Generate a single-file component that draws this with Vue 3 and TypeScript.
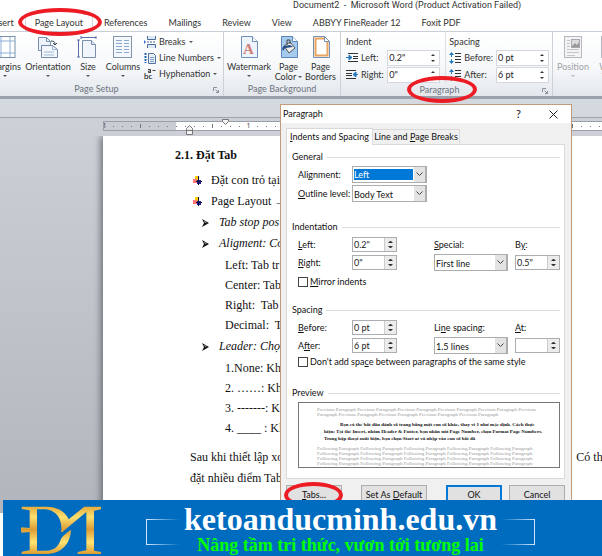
<script setup lang="ts">
import { ref } from 'vue'

const tabs: string[] = ['Insert', 'Page Layout', 'References', 'Mailings', 'Review', 'View', 'ABBYY FineReader 12', 'Foxit PDF']
const activeTab = ref('Page Layout')

const indentLeft = ref('0.2"')
const indentRight = ref('0"')
const before = ref('0 pt')
const after = ref('6 pt')
const by = ref('0.5"')
const at = ref('')
const mirror = ref(false)
const noSpace = ref(false)

const alignOptions: string[] = ['Left: Tab tr', 'Center: Tab', 'Right:  Tab', 'Decimal:  T']
const leaderOptions: string[] = ['1.None: Kh', '2. ……: Kh', '3. -------: K', '4. ____ : Kl']

const previous = Array(5).fill('Previous Paragraph').join(' ')
const following = Array(5).fill('Following Paragraph').join(' ')

const ticks: number[] = Array.from({ length: 56 }, (_, i) => i)
</script>

<template>
  <div class="window">
    <header class="titlebar">Document2 &nbsp;-&nbsp; Microsoft Word (Product Activation Failed)</header>

    <nav class="tabs">
      <button
        v-for="t in tabs"
        :key="t"
        type="button"
        class="tab"
        :class="{ active: t === activeTab }"
        @click="activeTab = t"
      >{{ t }}</button>
    </nav>

    <section class="ribbon">
      <div class="group setup">
        <div class="items">
          <button type="button" class="big w-margins">
            <svg width="22" height="22" viewBox="0 0 22 22"><rect x="2" y=".5" width="19" height="21" fill="#fff" stroke="#7a90ac" /><path d="M7 1v20M16 1v20M2 5h19M2 17h19" stroke="#8db0d8" /></svg>
            <span>Margins</span><i class="arrow"></i>
          </button>
          <button type="button" class="big w-orient">
            <svg width="22" height="22" viewBox="0 0 22 22"><path d="M1.500 1.500h8l4 4v9h-12z" fill="#eef4fb" stroke="#7a90ac" /><path d="M9.500 1.500v4h4" fill="none" stroke="#7a90ac" /><path d="M4.500 9.500h11l5 4v8h-16z" fill="#f4f8fd" stroke="#6f88a8" /><path d="M15.500 9.500v4h5M7 16h10M7 19h10" fill="none" stroke="#9cb6d6" /><path d="M14 5c3 0 4 1 4 3m-2-1 2 2 2-2" fill="none" stroke="#345" /></svg>
            <span>Orientation</span><i class="arrow"></i>
          </button>
          <button type="button" class="big w-size">
            <svg width="22" height="22" viewBox="0 0 22 22"><path d="M4 1.500h15M1.500 4v17M4 0v3M19 0v3M0 4h3M0 21h3" stroke="#5b6fa3" /><path d="M5.500 4.500h9l4 4v13h-13z" fill="#f1f6fc" stroke="#7a90ac" /><path d="M14.500 4.500v4h4" fill="#d5e3f3" stroke="#7a90ac" /></svg>
            <span>Size</span><i class="arrow"></i>
          </button>
          <button type="button" class="big w-cols">
            <svg width="22" height="22" viewBox="0 0 22 22"><rect x="1.500" y=".5" width="18" height="21" fill="#f4f8fd" stroke="#8496ae" /><path d="M4 4.500h6M4 7.500h6M4 10.500h6M4 13.500h6M4 16.500h6M12 4.500h5M12 7.500h5M12 10.500h5M12 13.500h5M12 16.500h5" stroke="#8ba9cf" /></svg>
            <span>Columns</span><i class="arrow"></i>
          </button>
          <div class="stack">
            <button type="button" class="small">
              <svg width="12" height="12" viewBox="0 0 12 12"><path d="M3.500 0v3.500h8V0M3.500 12V8.500h8V12" fill="#dbe8f7" stroke="#4a6a99" /><path d="M3 6h9" stroke="#4a6a99" stroke-dasharray="2 1" /><path d="M0 4l2 2-2 2z" fill="#37c" /></svg>
              Breaks <i class="arrow"></i>
            </button>
            <button type="button" class="small">
              <svg width="12" height="12" viewBox="0 0 12 12"><path d="M4.500 1.500h5l2 2v8h-7z" fill="#e7effa" stroke="#55719c" /><path d="M6 5.500h4M6 7.500h4M6 9.500h4" stroke="#7c9ccb" /><path d="M1.500 1v10" stroke="#26a" stroke-width="2" stroke-dasharray="2 1" /></svg>
              Line Numbers <i class="arrow"></i>
            </button>
            <button type="button" class="small">
              <svg width="12" height="12" viewBox="0 0 12 12"><text x="0" y="11" font-size="8">bc</text><path d="M4 1.500h2.500v3.500M6.500 3H4.500v1.500h2M8.500 2.500h3" fill="none" stroke="#444" /></svg>
              Hyphenation <i class="arrow"></i>
            </button>
          </div>
        </div>
        <div class="caption">Page Setup
          <svg class="launch" width="6" height="6" viewBox="0 0 6 6"><path d="M.5 4V.5H4M2.500 2.500l3 3M5.500 3v2.500H3" fill="none" stroke="#8a919c" /></svg>
        </div>
      </div>

      <div class="group background">
        <div class="items">
          <button type="button" class="big w-water">
            <svg width="22" height="22" viewBox="0 0 22 22"><path d="M3.500.5h11l5 5v16h-16z" fill="#eef4fb" stroke="#6f90bb" /><path d="M14.500.5v5h5" fill="#fff" stroke="#6f90bb" /><text x="5" y="18" font-size="15" font-weight="bold" font-family="Liberation Serif, serif" fill="#d0807a">A</text></svg>
            <span>Watermark</span><i class="arrow"></i>
          </button>
          <button type="button" class="big w-color">
            <svg width="22" height="22" viewBox="0 0 22 22"><path d="M3.500.5h11l5 5v16h-16z" fill="#a6cbee" stroke="#5c86ba" /><path d="M14.500.5v5h5" fill="#fff" stroke="#5c86ba" /><path d="M6 10l6-4 5 6-6 5z" fill="#eee" stroke="#555" /><path d="M9 9V4h3v4" fill="none" stroke="#444" /><path d="M6 10c-2 1-2 3-1 5l2-3 8-1-3-2z" fill="#234a80" /></svg>
            <span>Page</span><span>Color <i class="arrow"></i></span>
          </button>
          <button type="button" class="big w-border">
            <svg width="22" height="22" viewBox="0 0 22 22"><path d="M3.500.5h11l5 5v16h-16z" fill="#fff" stroke="#7590b5" /><path d="M5.500 2.500h9l3 4v13h-12z" fill="#fff" stroke="#e8a45e" stroke-width="2" /><path d="M14.500.5v5h5z" fill="#fff" stroke="#7590b5" /></svg>
            <span>Page</span><span>Borders</span>
          </button>
        </div>
        <div class="caption">Page Background</div>
      </div>

      <div class="group para">
        <div class="halves">
          <div class="half">
            <div class="half-title">Indent</div>
            <label class="field" for="r-left">
              <svg width="12" height="11" viewBox="0 0 12 11"><path d="M2 1.500h10M7 4.500h5M7 6.500h5M2 9.500h10" stroke="#333" /><path d="M0 5.500h4M3 3l3 2.500L3 8z" fill="#27b" stroke="#27b" /></svg>
              <span>Left:</span>
              <span class="spin"><input id="r-left" v-model="indentLeft" type="text" /><i class="ud"></i></span>
            </label>
            <label class="field" for="r-right">
              <svg width="12" height="11" viewBox="0 0 12 11"><path d="M0 1.500h10M0 4.500h6M0 6.500h6M0 9.500h10" stroke="#333" /><path d="M8 5.500h4M10 3L7 5.500 10 8z" fill="#27b" stroke="#27b" /></svg>
              <span>Right:</span>
              <span class="spin"><input id="r-right" v-model="indentRight" type="text" /><i class="ud"></i></span>
            </label>
          </div>
          <div class="half second">
            <div class="half-title">Spacing</div>
            <label class="field" for="r-before">
              <svg width="12" height="12" viewBox="0 0 12 12"><path d="M6 1.500h6M6 4.500h6M6 7.500h6M6 10.500h6" stroke="#333" /><path d="M2.500 0L5 3H0zM2.500 12L5 9H0zM2 3h1v2H2zM2 7h1v2H2z" fill="#27b" /></svg>
              <span>Before:</span>
              <span class="spin"><input id="r-before" v-model="before" type="text" /><i class="ud"></i></span>
            </label>
            <label class="field" for="r-after">
              <svg width="12" height="12" viewBox="0 0 12 12"><path d="M6 1.500h6M6 4.500h6M6 7.500h6M6 10.500h6" stroke="#333" /><path d="M2.500 0L5 3H0zM2.500 12L5 9H0zM2 3h1v2H2zM2 7h1v2H2z" fill="#27b" /></svg>
              <span>After:</span>
              <span class="spin"><input id="r-after" v-model="after" type="text" /><i class="ud"></i></span>
            </label>
          </div>
        </div>
        <div class="caption">Paragraph
          <svg class="launch" width="6" height="6" viewBox="0 0 6 6"><path d="M.5 4V.5H4M2.500 2.500l3 3M5.500 3v2.500H3" fill="none" stroke="#8a919c" /></svg>
        </div>
      </div>

      <div class="group arrange">
        <div class="items">
          <button type="button" class="big w-pos" disabled>
            <svg width="22" height="22" viewBox="0 0 22 22"><rect x="2.500" y=".5" width="17" height="21" fill="#f3f3f5" stroke="#b5b8be" /><path d="M5 4.500h3M5 7.500h3M5 10.500h3M5 13.500h12M5 16.500h12M5 19.500h8" stroke="#c3c5ca" /><rect x="9.500" y="3.500" width="8" height="8" fill="#ddd" stroke="#a6a8ad" /><path d="M10 10l3-3 2 2 2-3v5h-7z" fill="#999" /></svg>
            <span>Position</span><i class="arrow"></i>
          </button>
          <button type="button" class="big w-wrap" disabled>
            <svg width="22" height="22" viewBox="0 0 22 22"><rect x="2.500" y=".5" width="17" height="21" fill="#f3f3f5" stroke="#b5b8be" /></svg>
            <span>Wrap</span><span>Text</span>
          </button>
        </div>
      </div>
    </section>

    <div class="gap-strip"></div>

    <div class="workspace">
      <div class="ruler">
        <div class="ruler-track">
          <i v-for="n in ticks" :key="n" :class="{ tall: n % 8 === 4, digit: n % 16 === 0 && n < 20 }"><template v-if="n % 16 === 0 && n < 20">1</template></i>
        </div>
        <svg class="indent-low" width="7" height="10" viewBox="0 0 7 10"><path d="M.5 3.500l3-3 3 3v6h-6zM.5 5.500h6" fill="#f3f3f3" stroke="#777" /></svg>
        <svg class="indent-top" width="7" height="6" viewBox="0 0 7 6"><path d="M.5.5h6v2l-3 3-3-3z" fill="#f3f3f3" stroke="#777" /></svg>
      </div>

      <main class="page">
        <h1>2.1. Đặt Tab</h1>
        <ul class="bullets">
          <li v-for="b in ['Đặt con trỏ tại', 'Page Layout →']" :key="b">
            <svg width="9" height="9" viewBox="0 0 9 9"><rect x="2" y="0" width="4" height="5" fill="#fc0" /><rect x="0" y="3" width="4" height="4" fill="#f77" /><rect x="4" y="4" width="4" height="4" fill="#229" /><path d="M5.500 0v9M3 5.500h6" stroke="#114" /></svg>
            <span>{{ b }}</span>
          </li>
        </ul>
        <ul class="arrows">
          <li><svg width="7" height="8" viewBox="0 0 7 8"><path d="M0 0l7 4-7 4 2-4zM2 2l1 1.500h2z" fill="#111" fill-rule="evenodd" /></svg><em>Tab stop pos</em></li>
          <li><svg width="7" height="8" viewBox="0 0 7 8"><path d="M0 0l7 4-7 4 2-4zM2 2l1 1.500h2z" fill="#111" fill-rule="evenodd" /></svg><em>Aligment: Co</em></li>
        </ul>
        <ul class="options"><li v-for="o in alignOptions" :key="o">{{ o }}</li></ul>
        <ul class="arrows">
          <li><svg width="7" height="8" viewBox="0 0 7 8"><path d="M0 0l7 4-7 4 2-4zM2 2l1 1.500h2z" fill="#111" fill-rule="evenodd" /></svg><em>Leader: Chọ</em></li>
        </ul>
        <ul class="options"><li v-for="o in leaderOptions" :key="o">{{ o }}</li></ul>
        <p class="first"><span>Sau khi thiết lập xo</span><span class="tail">Có thể</span></p>
        <p>đặt nhiều  điểm Tab</p>
        <h1 class="next">2.2. Xóa Tab</h1>
      </main>
    </div>

    <div class="mark mark-tab"></div>
    <div class="mark mark-group"></div>

    <form class="dialog" role="dialog" aria-labelledby="dlg-title" @submit.prevent>
      <div class="dlg-bar">
        <span id="dlg-title">Paragraph</span>
        <button type="button" class="glyph" aria-label="Help">?</button>
        <button type="button" class="glyph" aria-label="Close"><svg width="9" height="9" viewBox="0 0 9 9"><path d="M.5.5l8 8M8.500.5l-8 8" stroke="#222" /></svg></button>
      </div>
      <div class="dlg-tabs">
        <button type="button" class="on"><u>I</u>ndents and Spacing</button>
        <button type="button">Line and <u>P</u>age Breaks</button>
      </div>
      <div class="panel">
        <h2>General</h2>
        <div class="grid general">
          <label for="align">Ali<u>g</u>nment:</label>
          <span class="drop focus"><select id="align"><option>Left</option></select><svg width="7" height="5" viewBox="0 0 7 5"><path d="M.5.5l3 3 3-3" fill="none" stroke="#444" /></svg></span>
          <label for="outline"><u>O</u>utline level:</label>
          <span class="drop"><select id="outline"><option>Body Text</option></select><svg width="7" height="5" viewBox="0 0 7 5"><path d="M.5.5l3 3 3-3" fill="none" stroke="#444" /></svg></span>
        </div>

        <h2 class="h-indent">Indentation</h2>
        <div class="grid">
          <label for="d-left"><u>L</u>eft:</label>
          <span class="spin dlg"><input id="d-left" v-model="indentLeft" type="text" /><i class="ud"></i></span>
          <label for="special"><u>S</u>pecial:</label>
          <label for="by">B<u>y</u>:</label>
          <label for="d-right"><u>R</u>ight:</label>
          <span class="spin dlg"><input id="d-right" v-model="indentRight" type="text" /><i class="ud"></i></span>
          <span class="drop"><select id="special"><option>First line</option></select><svg width="7" height="5" viewBox="0 0 7 5"><path d="M.5.5l3 3 3-3" fill="none" stroke="#444" /></svg></span>
          <span class="spin dlg"><input id="by" v-model="by" type="text" /><i class="ud"></i></span>
        </div>
        <label class="check mirror"><input v-model="mirror" type="checkbox" /><span><u>M</u>irror indents</span></label>

        <h2>Spacing</h2>
        <div class="grid">
          <label for="d-before"><u>B</u>efore:</label>
          <span class="spin dlg"><input id="d-before" v-model="before" type="text" /><i class="ud"></i></span>
          <label for="line">Li<u>n</u>e spacing:</label>
          <label for="at"><u>A</u>t:</label>
          <label for="d-after">A<u>f</u>ter:</label>
          <span class="spin dlg"><input id="d-after" v-model="after" type="text" /><i class="ud"></i></span>
          <span class="drop"><select id="line"><option>1.5 lines</option></select><svg width="7" height="5" viewBox="0 0 7 5"><path d="M.5.5l3 3 3-3" fill="none" stroke="#444" /></svg></span>
          <span class="spin dlg"><input id="at" v-model="at" type="text" /><i class="ud"></i></span>
        </div>
        <label class="check same"><input v-model="noSpace" type="checkbox" /><span>Don't add spa<u>c</u>e between paragraphs of the same style</span></label>

        <h2 class="h-preview">Preview</h2>
        <div class="preview">
          <p class="ghost">{{ previous }} Previous<br />Paragraph {{ previous.slice(0, 75) }}</p>
          <p class="sample">Bạn có thể bắt đầu đánh số trang bằng một con số khác, thay vì 1 như mặc định. Cách thực<br />hiện: Tại thẻ Insert, nhóm Header &amp; Footer, bạn nhấn nút Page Number, chọn Format Page Numbers.<br />Trong hộp thoại xuất hiện, bạn chọn Start at và nhập vào con số bắt đầ</p>
          <p class="ghost"><template v-for="n in 4" :key="n">{{ following }}<br /></template></p>
        </div>
      </div>
      <div class="dlg-buttons">
        <button type="button" class="b-tabs"><u>T</u>abs...<i class="mark mark-btn"></i></button>
        <button type="button" class="b-default">Set As <u>D</u>efault</button>
        <button type="submit" class="b-ok">OK</button>
        <button type="button" class="b-cancel">Cancel</button>
      </div>
    </form>

    <footer class="banner">
      <svg class="logo" width="80" height="48" viewBox="0 0 240 144">
        <defs>
          <linearGradient id="gold" x1="0" y1="0" x2="0" y2="1">
            <stop offset="0" stop-color="#e8ac3c" /><stop offset=".22" stop-color="#fbe070" />
            <stop offset=".48" stop-color="#dc9c34" /><stop offset=".75" stop-color="#ffe473" /><stop offset="1" stop-color="#dc9c30" />
          </linearGradient>
        </defs>
        <path fill="url(#gold)" d="M2 2H75C108 2 132 16 143 40L190 2H240V10L219 14V134L240 138V144H170V138L196 133V18L124 78H120C124 60 120 14 72 10H48V134H72C108 134 116 112 120 98C128 86 138 80 150 71C148 112 124 144 72 144H2V137L26 133V78L2 80L0 76V66L2 64L26 66V13L2 9Z" />
      </svg>
      <div class="slogan">
        <i class="bracket left"></i>
        <div class="lines">
          <a href="#">ketoanducminh.edu.vn</a>
          <span>Nâng tầm tri thức, vươn tới tương lai</span>
        </div>
        <i class="bracket right"></i>
      </div>
    </footer>
  </div>
</template>

<style>
body { margin: 0; background: #fff; }
</style>

<style scoped>
* { box-sizing: border-box; }
button, input, select { font: inherit; color: inherit; margin: 0; padding: 0; border: 0; background: none; }
button { white-space: nowrap; }
h1, h2, p, ul { margin: 0; padding: 0; }
ul { list-style: none; }
svg { display: block; flex: none; }

.window {
  position: relative;
  display: flex;
  flex-direction: column;
  min-height: 100vh;
  overflow: hidden;
  font: 9px/12px Lato, "Liberation Sans", sans-serif;
  color: #333;
}
.titlebar { height: 14px; font-family: Roboto, sans-serif; line-height: 10px; padding-left: 293px; color: #333; white-space: nowrap; }
.tabs { display: flex; gap: 21px; height: 17px; margin-left: -9px; }
.tab { line-height: 16px; }
.tab.active { box-shadow: -10px 0 0 -1px #fff, -10px 0 0 0 #d4d8de, 10px 0 0 -1px #fff, 10px 0 0 0 #d4d8de; }

.ribbon {
  display: flex;
  height: 65px;
  border-top: 1px solid #c9cfd8;
  background: linear-gradient(#fff, #f6f8fa 55%, #e3e7ec);
  position: relative;
}
.group { display: flex; flex-direction: column; justify-content: space-between; flex: none; border-right: 1px solid #cdd1d7; }
.items { display: flex; align-items: flex-start; padding-top: 4px; }
.setup { width: 224px; }
.setup .items { margin-left: -15px; }
.background { width: 117px; }
.para { width: 212px; }
.arrange { flex: 1 1 0; overflow: hidden; border: 0; }
.caption { display: flex; align-items: center; justify-content: center; gap: 0; position: relative; height: 14px; color: #6d7480; }
.setup .caption { padding-right: 30px; }
.para .caption { padding-right: 14px; }
.launch { position: absolute; right: 4px; top: 5px; }
.big { display: flex; flex-direction: column; align-items: center; flex: none; line-height: 10px; }
.big svg { margin-bottom: 4px; }
.big > .arrow { margin-top: 3px; }
.big:disabled { color: #a0a3a8; }
.arrow { display: inline-block; width: 0; height: 0; border: 2px solid transparent; border-top-color: #555; border-bottom: 0; vertical-align: 2px; }
.big:disabled .arrow { border-top-color: #bbb; }
.w-margins { width: 40px; }
.w-orient { width: 46px; }
.w-size { width: 34px; }
.w-cols { width: 36px; }
.w-water { width: 50px; }
.w-color { width: 29px; }
.w-border { width: 35px; }
.w-pos { width: 40px; }
.w-wrap { width: 34px; }
.stack { display: flex; flex-direction: column; gap: 4px; padding-left: 3px; }
.small { display: flex; align-items: center; gap: 3px; height: 12px; }

.halves { display: flex; }
.half { flex: 1 1 0; padding: 4px 5px 0 5px; }
.half.second { border-left: 1px solid #dcdfe4; padding: 4px 3px 0 3px; }
.half-title { height: 13px; }
.field { display: flex; align-items: center; gap: 3px; height: 17px; }
.field .spin { margin-left: auto; width: 53px; height: 16px; border: 1px solid #d4d8de; }
.spin { display: flex; background: #fff; color: #222; }
.spin input { flex: 1 1 0; min-width: 0; padding-left: 1px; }
.ud { display: flex; flex-direction: column; justify-content: space-between; width: 12px; padding: 3px 4px; }
.ud::before, .ud::after { content: ""; border: 2px solid transparent; }
.ud::before { border-bottom-color: #333; border-top: 0; }
.ud::after { border-top-color: #333; border-bottom: 0; }

.gap-strip { height: 22px; border-top: 3px solid #9aa1ab; border-bottom: 1px solid #9da3ad; background: #d4d9e0; }

.workspace {
  display: flex;
  flex-direction: column;
  height: 395px;
  padding-left: 103px;
  background: linear-gradient(#cdd1d7, #b2b5bb);
}
.ruler { position: relative; height: 18px; padding-top: 3px; flex: none; }
.ruler-track { display: flex; align-items: center; height: 10px; overflow: hidden; border: 1px solid #9a9fa8; border-right: 0; background: linear-gradient(90deg, #c9cdd3 72px, #fff 72px); }
.ruler-track i { flex: none; width: 1px; height: 1px; margin-right: 8px; background: #777; }
.ruler-track i.tall { height: 4px; }
.ruler-track i.digit { display: flex; justify-content: center; height: 8px; background: none; font: 7px/8px "Open Sans", sans-serif; }
.indent-low { position: absolute; left: 83px; top: 7px; }
.indent-top { position: absolute; left: 119px; top: 1px; }
.page {
  flex: 1;
  padding: 10px 0 0 72px;
  background: #fff;
  box-shadow: -2px 0 7px #666b73;
  font: 12px/21px "Liberation Serif", serif;
  color: #111;
  white-space: pre;
  overflow: hidden;
  clip-path: inset(0 0 0 -10px);
}
h1 { font-size: 12px; line-height: 19px; }
.bullets { padding: 5px 0 0 18px; }
.bullets li { display: flex; align-items: center; gap: 9px; }
.arrows { padding-left: 27px; }
.arrows li { display: flex; align-items: center; gap: 10px; }
.options { padding: 1px 0 1px 50px; line-height: 20px; }
.page p { margin-left: 15px; display: flex; justify-content: space-between; }
.page .first { margin-top: 8px; }
.tail { flex: none; margin-right: -6px; }
.next { line-height: 33px; }

.mark { position: absolute; border: 4px solid #ed1c24; border-radius: 50%; pointer-events: none; }
.mark-tab { left: 18px; top: 8px; width: 84px; height: 28px; }
.mark-group { left: 407px; top: 76px; width: 70px; height: 27px; }
.mark-btn { left: -3px; top: -4px; width: 59px; height: 26px; }

.dialog {
  position: absolute;
  left: 280px;
  top: 104px;
  width: 292px;
  padding-bottom: 12px;
  border: 1px solid #c49a78;
  background: #f0f0f0;
  color: #111;
}
.dlg-bar { display: flex; align-items: center; height: 18px; padding: 0 13px 0 2px; background: #fff; }
.dlg-bar #dlg-title { flex: 1; }
.glyph { display: flex; align-items: center; justify-content: center; font-size: 11px; }
.glyph + .glyph { margin-left: 28px; }
.dlg-tabs { display: flex; align-items: flex-end; padding: 5px 0 0 5px; }
.dlg-tabs button { width: 87px; height: 15px; border: 1px solid #d9d9d9; border-bottom: 0; border-left: 0; }
.dlg-tabs .on { height: 17px; margin-bottom: -1px; border-left: 1px solid #d9d9d9; background: #fff; position: relative; }
.panel { margin: 0 6px 0 5px; padding: 5px 4px 10px 5px; border: 1px solid #d9d9d9; background: #fff; }
h2 { display: flex; align-items: center; gap: 4px; font-size: 9px; font-weight: 400; height: 14px; margin-bottom: 2px; }
h2::after { content: ""; flex: 1; height: 1px; background: #ddd; }
.h-indent { margin-top: 18px; }
.h-preview { margin-top: 18px; }
.grid { display: grid; grid-template-columns: 47px 75px 74px 45px; column-gap: 7px; row-gap: 1px; padding-left: 6px; white-space: nowrap; }
.grid > * { height: 17px; line-height: 17px; }
.general { grid-template-columns: 47px 75px; row-gap: 2px; }
.drop { display: flex; align-items: center; position: relative; border: 1px solid #adadad; background: linear-gradient(#e3e3e3, #e3e3e3) right / 12px 100% no-repeat #fff; box-shadow: inset -13px 0 0 -12px #adadad; }
.drop select { width: 100%; height: 100%; padding-left: 1px; appearance: none; }
.drop svg { position: absolute; right: 3px; pointer-events: none; }
.drop.focus select { background: #0078d7; color: #fff; width: 59px; height: 11px; margin-left: 1px; padding-left: 0; line-height: 11px; }
.grid .spin.dlg { width: 45px; height: 15px; align-self: center; border: 1px solid #abadb3; }
.spin.dlg .ud { width: 12px; padding: 3px; background: #ececec; border-left: 1px solid #ccc; }
.check { display: flex; align-items: center; gap: 2px; height: 13px; padding-left: 6px; }
.check input { appearance: none; width: 10px; height: 10px; border: 1px solid #444; background: #fff; }
.mirror { margin: 4px 0 15px; }
.same { margin-top: 1px; }
.preview { height: 66px; margin-left: 6px; padding: 4px 18px; overflow: hidden; border: 1px solid #777; font: 5px/5px "Liberation Serif", serif; white-space: nowrap; }
.ghost { color: #999; }
.sample { margin: 4px 0 4px 7px; line-height: 7px; text-indent: 16px; font-weight: 700; color: #111; }
.dlg-buttons { display: flex; padding: 6px 6px 0 5px; }
.dlg-buttons button { position: relative; width: 56px; height: 19px; border: 1px solid #adadad; background: #e1e1e1; }
.dlg-buttons .b-default { width: 66px; margin-left: 19px; }
.dlg-buttons .b-ok { margin-left: auto; border: 2px solid #0078d7; }
.dlg-buttons .b-cancel { margin-left: 7px; }

.banner {
  position: absolute;
  left: 3px;
  right: 0;
  bottom: 0;
  display: flex;
  align-items: center;
  height: 56px;
  padding: 3px 0 0 18px;
  background: #006cbf;
  font-family: "Liberation Serif", serif;
  font-weight: 700;
}
.slogan { display: flex; align-items: center; margin-left: 45px; }
.lines { display: flex; flex-direction: column; align-items: center; }
.lines a { font-size: 32px; line-height: 30px; color: #fff; text-decoration: none; }
.lines span { font-size: 18px; line-height: 22px; color: #0f0; }
.bracket { width: 34px; height: 26px; background: linear-gradient(90deg, #cfe6fa, transparent) top / 100% 1px no-repeat, linear-gradient(90deg, #cfe6fa, transparent) bottom / 100% 1px no-repeat; border-left: 1px solid #cfe6fa; margin: 5px 4px 0 0; }
.bracket.right { margin: 5px 0 0 4px; transform: scaleX(-1); }
</style>
